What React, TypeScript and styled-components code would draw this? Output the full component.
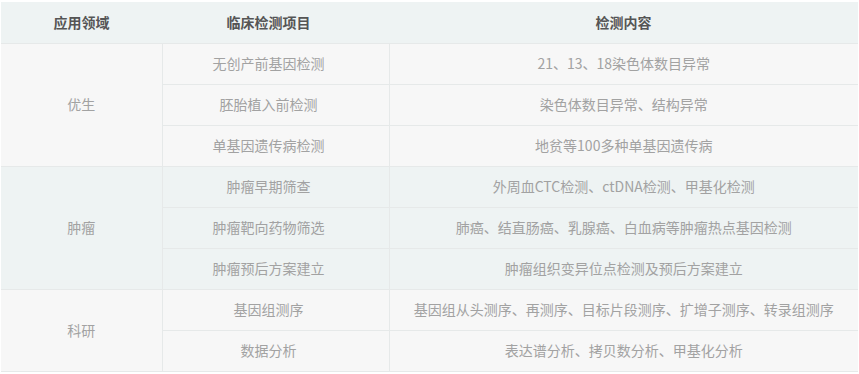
import styled, { createGlobalStyle } from 'styled-components';

const GlobalStyle = createGlobalStyle`
  html, body {
    margin: 0;
    padding: 0;
    background: #ffffff;
  }
  body {
    font-family: "Noto Sans CJK SC", "Liberation Sans", sans-serif;
  }
`;

const TEAL_BG = '#eef3f3';
const GRAY_BG = '#f7f7f7';
const LINE = '#e6e9e9';

const Wrapper = styled.div`
  padding: 2px 1px 0 1px;
`;

const Table = styled.table`
  width: 857px;
  border-collapse: collapse;
  table-layout: fixed;
`;

// $shift nudges centred text to the left, as the item column does in the design
const HeadCell = styled.th<{ $width: number; $shift?: number }>`
  width: ${(p) => p.$width}px;
  height: 40px;
  padding: 0 0 1px 0;
  background-color: ${TEAL_BG};
  color: #555555;
  font-size: 14px;
  font-weight: 700;
  text-align: center;
  text-indent: ${(p) => -(p.$shift ?? 0) * 2}px;
  line-height: 18px;
  border: none;
`;

const Row = styled.tr<{ $tone: 'gray' | 'teal' }>`
  background-color: ${(p) => (p.$tone === 'teal' ? TEAL_BG : GRAY_BG)};
`;

const Cell = styled.td<{ $shift?: number }>`
  height: 38px;
  padding: 0 0 2px 0;
  color: #a2a2a2;
  font-size: 14px;
  line-height: 18px;
  text-align: center;
  text-indent: ${(p) => -(p.$shift ?? 0) * 2}px;
  vertical-align: middle;
  border: 1px solid ${LINE};
  white-space: nowrap;

  &:first-child {
    border-left: none;
  }
  &:last-child {
    border-right: none;
  }
`;

type Group = {
  area: string;
  tone: 'gray' | 'teal';
  items: { name: string; content: string }[];
};

const groups: Group[] = [
  {
    area: '优生',
    tone: 'gray',
    items: [
      { name: '无创产前基因检测', content: '21、13、18染色体数目异常' },
      { name: '胚胎植入前检测', content: '染色体数目异常、结构异常' },
      { name: '单基因遗传病检测', content: '地贫等100多种单基因遗传病' },
    ],
  },
  {
    area: '肿瘤',
    tone: 'teal',
    items: [
      { name: '肿瘤早期筛查', content: '外周血CTC检测、ctDNA检测、甲基化检测' },
      { name: '肿瘤靶向药物筛选', content: '肺癌、结直肠癌、乳腺癌、白血病等肿瘤热点基因检测' },
      { name: '肿瘤预后方案建立', content: '肿瘤组织变异位点检测及预后方案建立' },
    ],
  },
  {
    area: '科研',
    tone: 'gray',
    items: [
      { name: '基因组测序', content: '基因组从头测序、再测序、目标片段测序、扩增子测序、转录组测序' },
      { name: '数据分析', content: '表达谱分析、拷贝数分析、甲基化分析' },
    ],
  },
];

export default function App() {
  return (
    <>
      <GlobalStyle />
      <Wrapper>
        <Table>
          <thead>
            <tr>
              <HeadCell $width={161}>应用领域</HeadCell>
              <HeadCell $width={227} $shift={7}>临床检测项目</HeadCell>
              <HeadCell $width={469}>检测内容</HeadCell>
            </tr>
          </thead>
          <tbody>
            {groups.map((g) =>
              g.items.map((item, i) => (
                <Row key={item.name} $tone={g.tone}>
                  {i === 0 && <Cell rowSpan={g.items.length}>{g.area}</Cell>}
                  <Cell $shift={7}>{item.name}</Cell>
                  <Cell>{item.content}</Cell>
                </Row>
              ))
            )}
          </tbody>
        </Table>
      </Wrapper>
    </>
  );
}
